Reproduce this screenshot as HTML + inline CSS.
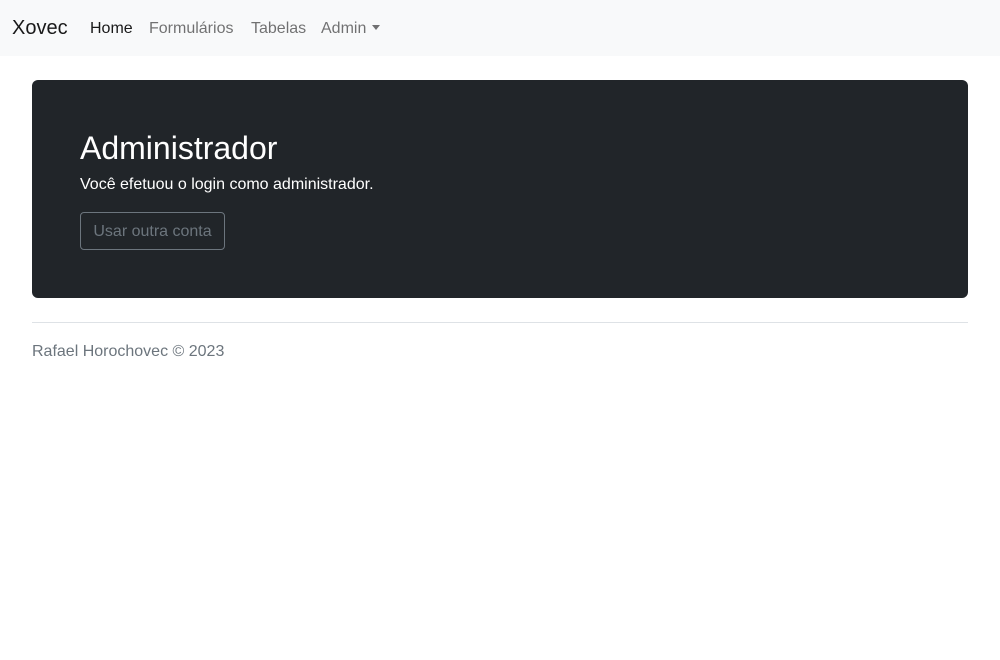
<!DOCTYPE html>
<html><head><meta charset="utf-8"><style>
body{margin:0;font-family:"Liberation Sans",sans-serif;background:#fff;color:#212529;}
nav{height:56px;background:#f8f9fa;position:relative;}
nav span{position:absolute;top:1px;line-height:56px;font-size:16px;color:rgba(0,0,0,.55);}
.brand{left:12px;font-size:20px!important;top:0!important;color:rgba(0,0,0,.9)!important;}
.jumbo{position:absolute;left:32px;top:80px;width:936px;height:218px;background:#212529;border-radius:6px;color:#fff;}
h1{position:absolute;left:48px;top:48px;margin:0;font-size:32px;font-weight:400;line-height:40px;}
p{position:absolute;left:48px;top:94px;margin:0;font-size:16px;line-height:22px;}
.btn{position:absolute;left:48px;top:132px;width:143px;height:36px;border:1px solid #6c757d;border-radius:4px;color:#6c757d;font-size:16px;line-height:38px;text-align:center;}
hr{position:absolute;left:32px;top:322px;width:936px;margin:0;border:0;border-top:1px solid #dee2e6;}
.foot{position:absolute;left:32px;top:341px;color:#6c757d;font-size:16px;line-height:22px;}
.caret{display:inline-block;border-top:5px solid rgba(0,0,0,.55);border-left:4px solid transparent;border-right:4px solid transparent;vertical-align:3px;margin-left:6px;}
</style></head><body>
<nav>
<span class="brand">Xovec</span>
<span style="left:90px;color:rgba(0,0,0,.9)">Home</span>
<span style="left:149px">Formulários</span>
<span style="left:251px">Tabelas</span>
<span style="left:321px">Admin<i class="caret"></i></span>
</nav>
<div class="jumbo">
<h1>Administrador</h1>
<p>Você efetuou o login como administrador.</p>
<div class="btn">Usar outra conta</div>
</div>
<hr>
<div class="foot">Rafael Horochovec © 2023</div>
</body></html>
